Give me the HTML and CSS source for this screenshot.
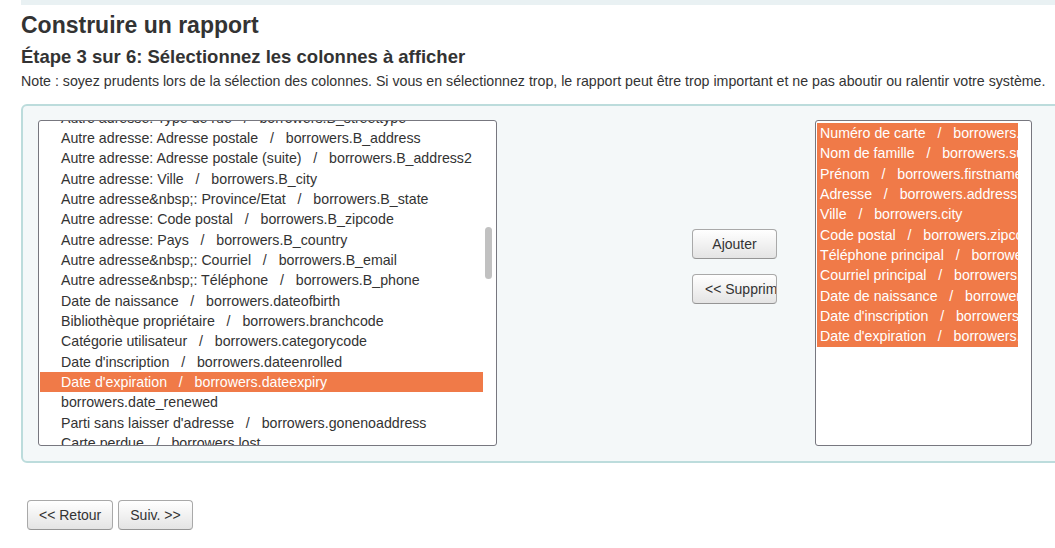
FILE: index.html
```html
<!DOCTYPE html>
<html lang="fr">
<head>
<meta charset="utf-8">
<title>Construire un rapport</title>
<link rel="stylesheet" href="styles.css">
</head>
<body>
<div class="topbar"></div>
<main class="page">
  <h1 class="title">Construire un rapport</h1>
  <h3 class="step">Étape 3 sur 6: Sélectionnez les colonnes à afficher</h3>
  <p class="note">Note : soyez prudents lors de la sélection des colonnes. Si vous en sélectionnez trop, le rapport peut être trop important et ne pas aboutir ou ralentir votre système.</p>

  <div class="panel">
    <div class="listbox listbox-left">
      <div class="list">
        <div class="opts opts-scrolled">
          <div class="opt">Autre adresse: Type de rue   /   borrowers.B_streettype</div>
          <div class="opt">Autre adresse: Adresse postale   /   borrowers.B_address</div>
          <div class="opt">Autre adresse: Adresse postale (suite)   /   borrowers.B_address2</div>
          <div class="opt">Autre adresse: Ville   /   borrowers.B_city</div>
          <div class="opt">Autre adresse&amp;nbsp;: Province/Etat   /   borrowers.B_state</div>
          <div class="opt">Autre adresse: Code postal   /   borrowers.B_zipcode</div>
          <div class="opt">Autre adresse: Pays   /   borrowers.B_country</div>
          <div class="opt">Autre adresse&amp;nbsp;: Courriel   /   borrowers.B_email</div>
          <div class="opt">Autre adresse&amp;nbsp;: Téléphone   /   borrowers.B_phone</div>
          <div class="opt">Date de naissance   /   borrowers.dateofbirth</div>
          <div class="opt">Bibliothèque propriétaire   /   borrowers.branchcode</div>
          <div class="opt">Catégorie utilisateur   /   borrowers.categorycode</div>
          <div class="opt">Date d'inscription   /   borrowers.dateenrolled</div>
          <div class="opt selected">Date d'expiration   /   borrowers.dateexpiry</div>
          <div class="opt">borrowers.date_renewed</div>
          <div class="opt">Parti sans laisser d'adresse   /   borrowers.gonenoaddress</div>
          <div class="opt">Carte perdue   /   borrowers.lost</div>
          <div class="opt">Suspendu jusqu'au   /   borrowers.debarred</div>
        </div>
      </div>
      <div class="track"><div class="thumb"></div></div>
    </div>

    <div class="actions">
      <button class="btn btn-fixed" type="button">Ajouter</button>
      <button class="btn btn-fixed" type="button">&lt;&lt; Supprimer</button>
    </div>

    <div class="listbox listbox-right">
      <div class="list list-right">
        <div class="opts">
          <div class="opt selected">Numéro de carte   /   borrowers.cardnumber</div>
          <div class="opt selected">Nom de famille   /   borrowers.surname</div>
          <div class="opt selected">Prénom   /   borrowers.firstname</div>
          <div class="opt selected">Adresse   /   borrowers.address</div>
          <div class="opt selected">Ville   /   borrowers.city</div>
          <div class="opt selected">Code postal   /   borrowers.zipcode</div>
          <div class="opt selected">Téléphone principal   /   borrowers.phone</div>
          <div class="opt selected">Courriel principal   /   borrowers.email</div>
          <div class="opt selected">Date de naissance   /   borrowers.dateofbirth</div>
          <div class="opt selected">Date d'inscription   /   borrowers.dateenrolled</div>
          <div class="opt selected">Date d'expiration   /   borrowers.dateexpiry</div>
        </div>
      </div>
      <div class="gutter"></div>
    </div>
  </div>

  <div class="nav">
    <button class="btn btn-nav" type="button">&lt;&lt; Retour</button>
    <button class="btn btn-nav" type="button">Suiv. &gt;&gt;</button>
  </div>
</main>
</body>
</html>
```

FILE: styles.css
```css
html, body {
  margin: 0;
  padding: 0;
  overflow: hidden;
  background: #ffffff;
}

body {
  font-family: "Liberation Sans", Arial, sans-serif;
  color: #333333;
  font-size: 14px;
}

.topbar {
  height: 5px;
  margin-left: 21px;
  background: #e9f1f3;
}

.page {
  padding-left: 21px;
}

.title {
  margin: 8px 0 0 0;
  font-size: 23px;
  line-height: 25px;
  font-weight: bold;
  color: #333333;
}

.step {
  margin: 9px 0 0 0;
  font-size: 18.5px;
  line-height: 20px;
  font-weight: bold;
  color: #333333;
}

.note {
  margin: 6px 0 0 0;
  font-size: 14.2px;
  line-height: 16px;
  white-space: nowrap;
}

.panel {
  box-sizing: border-box;
  width: 1060px;
  margin-top: 15px;
  border: 2px solid #bcdcdc;
  border-radius: 6px;
  background: #f4f8f9;
  padding: 14px 15px 15px 15px;
  display: flex;
  align-items: flex-start;
}

.listbox {
  box-sizing: border-box;
  height: 326px;
  border: 1px solid #77777f;
  border-radius: 3px;
  background: #ffffff;
  display: flex;
  padding-left: 1px;
  flex: none;
}

.listbox-left {
  width: 459px;
}

.listbox-right {
  width: 217px;
  margin-left: 38px;
}

.list {
  overflow: hidden;
  height: 100%;
}

.listbox-left .list {
  width: 443px;
}

.list-right {
  width: 201px;
}

.opts {
  padding-top: 2px;
}

.opts-scrolled {
  padding-top: 0;
  margin-top: -13.5px;
}

.opt {
  height: 20.35px;
  line-height: 20.35px;
  white-space: pre;
  font-size: 14.2px;
  color: #333333;
}

.listbox-left .opt {
  padding-left: 21px;
}

.list-right .opt {
  padding-left: 3px;
}

.opt.selected {
  background: #f07a48;
  color: #ffffff;
}

.track {
  width: 13px;
  flex: none;
}

.thumb {
  width: 7px;
  height: 52px;
  margin-top: 106px;
  margin-left: 2px;
  border-radius: 4px;
  background: #c1c1c1;
}

.gutter {
  width: 13px;
  flex: none;
}

.actions {
  margin-left: 195px;
  margin-top: 109px;
  display: flex;
  flex-direction: column;
  gap: 15px;
  flex: none;
}

.btn {
  box-sizing: border-box;
  height: 30px;
  padding: 0 12px;
  font-family: "Liberation Sans", Arial, sans-serif;
  font-size: 14px;
  color: #333333;
  background: linear-gradient(#ffffff, #e4e4e4);
  border: 1px solid #a9a9a9;
  border-bottom-color: #959595;
  border-radius: 4px;
  white-space: nowrap;
  overflow: hidden;
  cursor: pointer;
}

.btn-fixed {
  width: 85px;
  text-align: center;
}

.btn-nav {
  padding: 0 11px;
}

.nav {
  margin-top: 37px;
  margin-left: 6px;
  display: flex;
  gap: 5px;
}
```
